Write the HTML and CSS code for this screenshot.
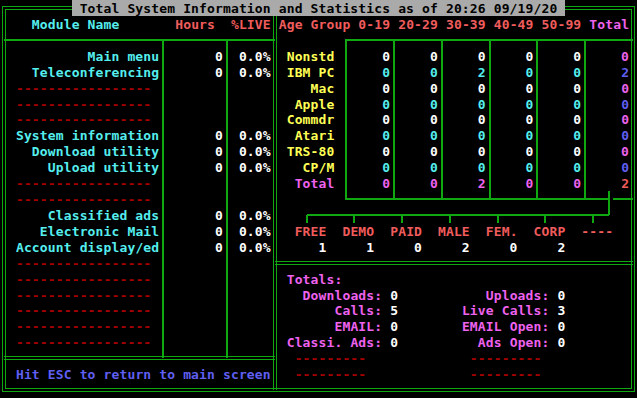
FILE: index.html
```html
<!DOCTYPE html>
<html lang="en">
<head>
    <meta charset="UTF-8">
    <meta name="viewport" content="width=device-width, initial-scale=1.0">
    <title>Total System Information</title>
    <link rel="stylesheet" href="styles.css">
</head>
<body>
    <div class="screen">
        <!-- box lines, drawn on a half-character grid -->
        <div class="frame"></div>
        <div class="split-main"></div>
        <div class="hline head-rule"></div>
        <div class="vline hours-rule"></div>
        <div class="vline live-rule"></div>
        <div class="esc-rule"></div>

        <div class="age-box"></div>
        <div class="hline age-top"></div>
        <div class="vline age-col c1"></div>
        <div class="vline age-col c2"></div>
        <div class="vline age-col c3"></div>
        <div class="vline age-col c4"></div>
        <div class="hline age-tail"></div>
        <div class="vline age-drop"></div>
        <div class="hline age-stub"></div>

        <div class="hline brace"></div>
        <div class="vline tick t1"></div>
        <div class="vline tick t2"></div>
        <div class="vline tick t3"></div>
        <div class="vline tick t4"></div>
        <div class="vline tick t5"></div>
        <div class="vline tick t6"></div>
        <div class="vline tick t7"></div>

        <div class="totals-rule"></div>

        <!-- text layer, 80 x 25 -->
        <div class="text">
<div class="row">         <span class="title"> Total System Information and Statistics as of 20:26 09/19/20 </span></div>
<div class="row">    <span class="cy">Module Name</span>       <span class="rd">Hours  %LIVE</span> <span class="rd">Age Group 0-19 20-29 30-39 40-49 50-99</span> <span class="mg">Total</span></div>
<div class="row"> </div>
<div class="row">           <span class="cy">Main menu</span>       0  0.0%  <span class="ye">Nonstd</span>      0     0     0     0     0     <span class="mg">0</span></div>
<div class="row">    <span class="cy">Teleconferencing</span>       0  0.0%  <span class="ye">IBM PC</span>      <span class="cy">0     0     2     0     0</span>     <span class="bl">2</span></div>
<div class="row">  <span class="dr">-----------------</span>                    <span class="ye">Mac</span>      0     0     0     0     0     <span class="mg">0</span></div>
<div class="row">  <span class="dr">-----------------</span>                  <span class="ye">Apple</span>      <span class="cy">0     0     0     0     0</span>     <span class="bl">0</span></div>
<div class="row">  <span class="dr">-----------------</span>                 <span class="ye">Commdr</span>      0     0     0     0     0     <span class="mg">0</span></div>
<div class="row">  <span class="cy">System information</span>       0  0.0%   <span class="ye">Atari</span>      <span class="cy">0     0     0     0     0</span>     <span class="bl">0</span></div>
<div class="row">    <span class="cy">Download utility</span>       0  0.0%  <span class="ye">TRS-80</span>      0     0     0     0     0     <span class="mg">0</span></div>
<div class="row">      <span class="cy">Upload utility</span>       0  0.0%    <span class="ye">CP/M</span>      <span class="cy">0     0     0     0     0</span>     <span class="bl">0</span></div>
<div class="row">  <span class="dr">-----------------</span>                  <span class="mg">Total</span>      <span class="mg">0     0     2     0     0</span>     <span class="rd">2</span></div>
<div class="row">  <span class="dr">-----------------</span></div>
<div class="row">      <span class="cy">Classified ads</span>       0  0.0%</div>
<div class="row">     <span class="cy">Electronic Mail</span>       0  0.0%   <span class="rd">FREE  DEMO  PAID  MALE  FEM.  CORP  ----</span></div>
<div class="row">  <span class="cy">Account display/ed</span>       0  0.0%      1     1     0     2     0     2</div>
<div class="row">  <span class="dr">-----------------</span></div>
<div class="row">  <span class="dr">-----------------</span>                 <span class="mg">Totals:</span></div>
<div class="row">  <span class="dr">-----------------</span>                   <span class="mg">Downloads:</span> 0           <span class="mg">Uploads:</span> 0</div>
<div class="row">  <span class="dr">-----------------</span>                       <span class="mg">Calls:</span> 5        <span class="mg">Live Calls:</span> 3</div>
<div class="row">  <span class="dr">-----------------</span>                       <span class="mg">EMAIL:</span> 0        <span class="mg">EMAIL Open:</span> 0</div>
<div class="row">  <span class="dr">-----------------</span>                 <span class="mg">Classi. Ads:</span> 0          <span class="mg">Ads Open:</span> 0</div>
<div class="row">                                     <span class="dr">---------</span>             <span class="dr">---------</span></div>
<div class="row">  <span class="bl">Hit ESC to return to main screen</span>   <span class="dr">---------</span>             <span class="dr">---------</span></div>
<div class="row"> </div>
        </div>
    </div>
</body>
</html>
```

FILE: styles.css
```css
body {
    margin: 0;
    background-color: #000;
}

/* 80x25 text screen, split into half cells so lines can sit mid-character */
.screen {
    width: 637px;
    height: 398px;
    display: grid;
    grid-template-columns: repeat(160, minmax(0, 1fr));
    grid-template-rows: repeat(50, minmax(0, 1fr));
    background-color: #000;
    color: #fff;
    font-family: 'DejaVu Sans Mono', 'Liberation Mono', monospace;
    font-weight: bold;
    font-size: 13px;
    letter-spacing: 0.136px;
    overflow: hidden;
}

.text {
    grid-column: 1 / -1;
    grid-row: 1 / -1;
    display: grid;
    grid-template-rows: repeat(25, minmax(0, 1fr));
}

.row {
    white-space: pre;
    line-height: 17.9px;
}

.title {
    display: inline-block;
    height: 16px;
    vertical-align: top;
    background-color: #aaaaaa;
    color: #000;
}

/* colours */
.cy { color: #55eeee; }
.rd { color: #f05c5c; }
.mg { color: #ee62ee; }
.ye { color: #ffff55; }
.bl { color: #5f5ff2; }
.dr { color: #a80000; }

/* lines */
.hline {
    border-top: 2px solid #10a810;
    margin-top: -1px;
}

.vline {
    border-left: 2px solid #10a810;
    margin-left: -1px;
}

.frame {
    grid-column: 2 / 160;
    grid-row: 2 / 50;
    border: 4px double #10a810;
    margin: -2px;
}

.split-main {
    grid-column: 70 / 71;
    grid-row: 2 / 50;
    border-left: 4px double #10a810;
    margin-left: -2px;
}

.head-rule   { grid-column: 2 / 70; grid-row: 6 / 7; }
.hours-rule  { grid-column: 42 / 43; grid-row: 6 / 46; }
.live-rule   { grid-column: 58 / 59; grid-row: 6 / 46; }

.esc-rule {
    grid-column: 2 / 70;
    grid-row: 46 / 47;
    border-top: 4px double #10a810;
    margin-top: -2px;
}

/* age group table */
.age-box {
    grid-column: 88 / 148;
    grid-row: 6 / 26;
    border: 2px solid #10a810;
    margin: -1px;
}

.age-top  { grid-column: 148 / 160; grid-row: 6 / 7; }
.age-col  { grid-row: 6 / 26; }
.age-col.c1 { grid-column: 100 / 101; }
.age-col.c2 { grid-column: 112 / 113; }
.age-col.c3 { grid-column: 124 / 125; }
.age-col.c4 { grid-column: 136 / 137; }
.age-tail { grid-column: 148 / 154; grid-row: 26 / 27; }
.age-drop { grid-column: 154 / 155; grid-row: 25 / 28; }
.age-stub { grid-column: 155 / 160; grid-row: 26 / 27; }

/* bracket above the account types */
.brace { grid-column: 78 / 154; grid-row: 28 / 29; }
.tick  { grid-row: 28 / 29; }
.tick.t1 { grid-column: 78 / 79; }
.tick.t2 { grid-column: 90 / 91; }
.tick.t3 { grid-column: 102 / 103; }
.tick.t4 { grid-column: 114 / 115; }
.tick.t5 { grid-column: 126 / 127; }
.tick.t6 { grid-column: 138 / 139; }
.tick.t7 { grid-column: 150 / 151; }

.totals-rule {
    grid-column: 70 / 160;
    grid-row: 34 / 35;
    border-top: 4px double #10a810;
    margin-top: -2px;
}
```
